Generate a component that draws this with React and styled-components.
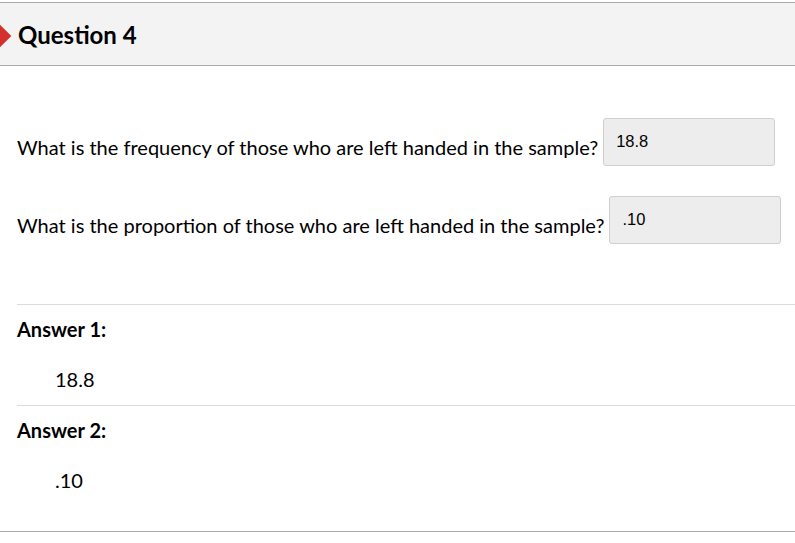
import React from "react";
import styled, { createGlobalStyle } from "styled-components";

const Global = createGlobalStyle`
  html, body { margin: 0; padding: 0; background: #fff; }
  body { font-family: Lato, "Open Sans", sans-serif; color: #000; }
`;

const Page = styled.div`
  width: 795px;
  height: 543px;
  overflow: hidden;
  padding-top: 2px;
  box-sizing: border-box;
`;

const Header = styled.div`
  position: relative;
  background: #f3f3f3;
  border-top: 1px solid #a9a9a9;
  border-bottom: 1px solid #a9a9a9;
  display: flex;
  align-items: center;
  padding-left: 18px;
  padding-top: 1px;
  box-sizing: border-box;
  height: 64px;
`;

const Flag = styled.div`
  position: absolute;
  left: -8px;
  top: 25px;
  width: 16px;
  height: 16px;
  background: #d3302f;
  transform: rotate(45deg);
`;

const Title = styled.h2`
  margin: 0;
  font-family: Lato, sans-serif;
  font-weight: 700;
  font-size: 24px;
  color: #000;
`;

const Body = styled.div`
  padding: 52px 0 0 17px;
`;

const QRow = styled.div`
  display: flex;
  align-items: flex-start;
  margin-bottom: ${(p) => p.$mb || 0}px;
`;

const QText = styled.span`
  font-size: 20px;
  line-height: 24px;
  margin-top: 17px;
  margin-right: 5px;
  white-space: nowrap;
`;

const Input = styled.div`
  box-sizing: border-box;
  width: 172px;
  height: 48px;
  background: #ededed;
  border: 1px solid #cfcfcf;
  border-radius: 3px;
  font-family: "Liberation Sans", Arial, sans-serif;
  font-size: 16.5px;
  line-height: 18px;
  padding: 13px 0 0 12px;
`;

const Answers = styled.div`
  margin-top: 60px;
`;

const AnswerBlock = styled.div`
  border-top: 1px solid #dcdcdc;
  height: 101px;
  box-sizing: border-box;
  padding-top: 12px;
`;

const AnswerLabel = styled.div`
  font-weight: 700;
  font-size: 20px;
  line-height: 24px;
`;

const AnswerValue = styled.div`
  font-size: 20px;
  line-height: 24px;
  margin-top: 26px;
  padding-left: 38px;
`;

const BottomRule = styled.div`
  margin-top: 25px;
  border-top: 1px solid #a9a9a9;
`;

export default function App() {
  return (
    <>
      <Global />
      <Page>
        <Header>
          <Flag />
          <Title>Question 4</Title>
        </Header>
        <Body>
          <QRow $mb={30}>
            <QText>What is the frequency of those who are left handed in the sample?</QText>
            <Input>18.8</Input>
          </QRow>
          <QRow>
            <QText>What is the proportion of those who are left handed in the sample?</QText>
            <Input>.10</Input>
          </QRow>
          <Answers>
            <AnswerBlock>
              <AnswerLabel>Answer 1:</AnswerLabel>
              <AnswerValue>18.8</AnswerValue>
            </AnswerBlock>
            <AnswerBlock>
              <AnswerLabel>Answer 2:</AnswerLabel>
              <AnswerValue>.10</AnswerValue>
            </AnswerBlock>
          </Answers>
        </Body>
        <BottomRule />
      </Page>
    </>
  );
}
